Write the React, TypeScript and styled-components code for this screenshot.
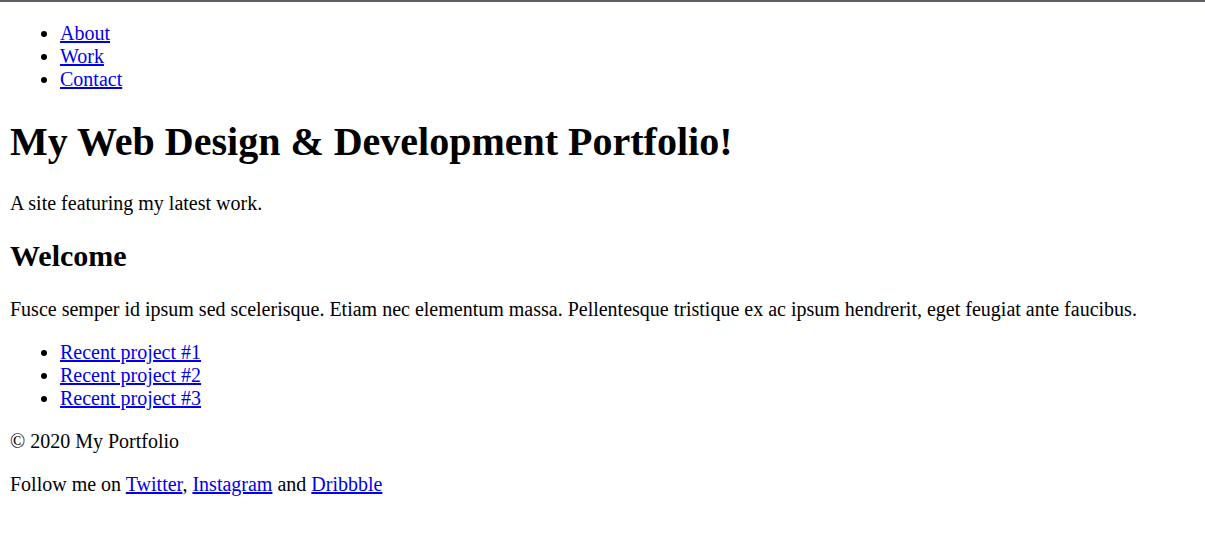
import React from "react";
import styled, { createGlobalStyle } from "styled-components";

const Global = createGlobalStyle`
  html {
    border-top: 2px solid #605a64;
    background: #ffffff;
  }
  body {
    margin: 0 10px 10px;
    font-family: "Liberation Serif", "Times New Roman", serif;
    font-size: 20px;
    color: #000000;
  }
`;

const Nav = styled.nav``;

const List = styled.ul`
  margin: 20px 0;
  padding-left: 50px;
  list-style: disc;
`;

const Item = styled.li`
  line-height: normal;
`;

const Link = styled.a`
  color: #0000ee;
  text-decoration: underline;
`;

const Title = styled.h1`
  font-size: 40px;
  font-weight: bold;
  margin: 26.8px 0;
`;

const Subtitle = styled.h2`
  font-size: 30px;
  font-weight: bold;
  margin: 24.9px 0;
`;

const Text = styled.p`
  margin: 20px 0;
`;

const Header = styled.header``;
const Main = styled.main``;
const Footer = styled.footer``;

export default function App() {
  return (
    <>
      <Global />
      <Header>
        <Nav>
          <List>
            <Item><Link href="#">About</Link></Item>
            <Item><Link href="#">Work</Link></Item>
            <Item><Link href="#">Contact</Link></Item>
          </List>
        </Nav>
        <Title>My Web Design &amp; Development Portfolio!</Title>
        <Text>A site featuring my latest work.</Text>
      </Header>
      <Main>
        <Subtitle>Welcome</Subtitle>
        <Text>
          Fusce semper id ipsum sed scelerisque. Etiam nec elementum massa. Pellentesque tristique ex ac ipsum hendrerit, eget feugiat ante faucibus.
        </Text>
        <List>
          <Item><Link href="#">Recent project #1</Link></Item>
          <Item><Link href="#">Recent project #2</Link></Item>
          <Item><Link href="#">Recent project #3</Link></Item>
        </List>
      </Main>
      <Footer>
        <Text>© 2020 My Portfolio</Text>
        <Text>
          Follow me on <Link href="#">Twitter</Link>, <Link href="#">Instagram</Link> and <Link href="#">Dribbble</Link>
        </Text>
      </Footer>
    </>
  );
}
